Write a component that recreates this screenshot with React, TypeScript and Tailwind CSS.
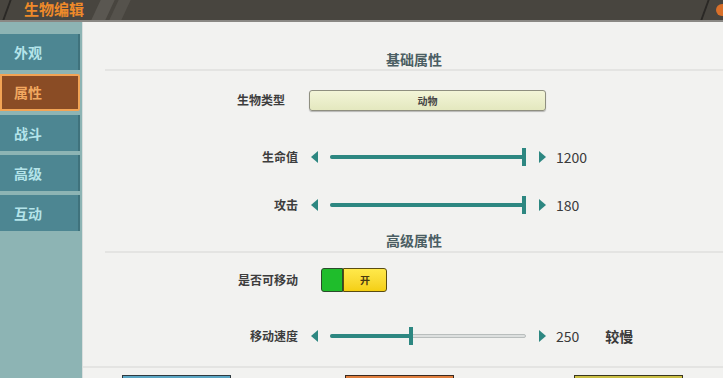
import { ReactNode } from "react";

const font = { fontFamily: '"Noto Sans CJK SC", "Noto Sans", sans-serif' };

const tabs = ["外观", "属性", "战斗", "高级", "互动"];

function Sidebar() {
  return (
    <div className="w-[83px] shrink-0 bg-[#8db4b4] flex flex-col pt-[12px] gap-[4px] border-r border-[#d9dedd]">
      {tabs.map((t) =>
        t === "属性" ? (
          <div
            key={t}
            className="h-[37px] mr-[2px] bg-[#8a4c25] border-2 border-[#f2a455] rounded-r-[2px] flex items-center pl-[12px] text-[14px] font-bold text-[#f2a860]"
          >
            {t}
          </div>
        ) : (
          <div
            key={t}
            className="h-[36px] mr-[2px] bg-[#4d8692] border-r-2 border-[#3f727c] flex items-center pl-[14px] text-[14px] font-bold text-[#b4e4ea]"
          >
            {t}
          </div>
        )
      )}
    </div>
  );
}

function Arrow({ dir }: { dir: "l" | "r" }) {
  return (
    <svg width="8" height="12" viewBox="0 0 8 12" className="shrink-0">
      {dir === "l" ? <path d="M7 0 L0 6 L7 12 Z" fill="#2d8781" /> : <path d="M1 0 L8 6 L1 12 Z" fill="#2d8781" />}
    </svg>
  );
}

function Slider({ pos, value, extra }: { pos: number; value: string; extra?: string }) {
  return (
    <div className="flex items-center h-full">
      <div className="ml-[13px]">
        <Arrow dir="l" />
      </div>
      <div className="relative ml-[11px] w-[196px] h-[20px] flex items-center">
        <div className="absolute left-0 right-0 h-[4px] bg-[#dde0df] border border-[#b9bebd] rounded-full" />
        <div className="absolute left-0 h-[4px] bg-[#2d8781] rounded-l-full" style={{ width: pos }} />
        <div className="absolute top-[1px] h-[18px] w-[4px] bg-[#2d8781]" style={{ left: pos - 2 }} />
      </div>
      <div className="ml-[12px]">
        <Arrow dir="r" />
      </div>
      <span className="ml-[10px] text-[14px] text-[#3a3a3a]">{value}</span>
      {extra && <span className="ml-[26px] text-[14px] font-bold text-[#3a3a3a]">{extra}</span>}
    </div>
  );
}

function Row({ label, h, children, labelW = 215 }: { label: string; h: number; children: ReactNode; labelW?: number }) {
  return (
    <div className="flex items-center" style={{ height: h }}>
      <div className="text-right text-[12px] font-bold text-[#3d3d3d] shrink-0" style={{ width: labelW }}>
        {label}
      </div>
      {children}
    </div>
  );
}

function Header({ text, h, pt }: { text: string; h: number; pt: number }) {
  return (
    <div className="ml-[22px] border-b-2 border-[#e4e4e2] flex justify-center" style={{ height: h, paddingTop: pt }}>
      <span className="text-[14px] leading-[16px] font-bold text-[#4b5e63]">{text}</span>
    </div>
  );
}

export default function App() {
  return (
    <div className="w-[723px] h-[378px] overflow-hidden bg-[#f2f2f0] flex flex-col" style={font}>
      <div className="relative h-[22px] shrink-0 bg-[#48453f] border-b-2 border-[#8a8884]">
        <div className="absolute left-[6px] top-0 h-[20px] w-[2px] bg-[#2a2825] skew-x-[-20deg]" />
        <div className="absolute left-[96px] top-0 h-[20px] w-[14px] bg-[#5a5751] skew-x-[-25deg]" />
        <div className="absolute left-[114px] top-0 h-[20px] w-[12px] bg-[#55524c] skew-x-[-25deg]" />
        <div className="absolute left-[704px] top-0 h-[20px] w-[2px] bg-[#2a2825] skew-x-[-20deg]" />
        <div className="absolute left-[716px] top-[4px] h-[12px] w-[7px] rounded-l-full bg-[#d9702a]" />
        <div className="absolute left-[24px] top-0 text-[15px] font-bold text-[#ee8a2a] leading-[18px]">生物编辑</div>
      </div>
      <div className="flex flex-1">
        <Sidebar />
        <div className="flex-1 flex flex-col">
          <Header text="基础属性" h={49} pt={29} />
          <Row label="生物类型" h={58} labelW={202}>
            <div className="ml-[24px] w-[237px] h-[21px] rounded-[3px] border border-[#8f8f80] bg-gradient-to-b from-[#f3f5d8] to-[#e4e8bf] shadow-[0_1px_1px_rgba(0,0,0,0.25)] flex items-center justify-center text-[10px] font-bold text-[#444]">
              动物
            </div>
          </Row>
          <Row label="生命值" h={56}>
            <Slider pos={194} value="1200" />
          </Row>
          <Row label="攻击" h={40}>
            <Slider pos={194} value="180" />
          </Row>
          <Header text="高级属性" h={28} pt={7} />
          <Row label="是否可移动" h={53}>
            <div className="ml-[23px] flex h-[24px]">
              <div className="w-[22px] h-full bg-[#1fbd2c] border border-[#2b4a2b] rounded-l-[3px]" />
              <div className="w-[44px] h-full bg-gradient-to-b from-[#ffe94a] to-[#f4cf10] border border-[#5a4c10] rounded-r-[3px] flex items-center justify-center text-[10px] font-bold text-[#4a3a10]">
                开
              </div>
            </div>
          </Row>
          <Row label="移动速度" h={60}>
            <Slider pos={81} value="250" extra="较慢" />
          </Row>
          <div className="border-t-2 border-[#e4e4e2] flex-1 relative">
            <div className="absolute left-[39px] top-[7px] w-[109px] h-[10px] bg-[#5ba6c4] border border-[#2f3a40]" />
            <div className="absolute left-[262px] top-[7px] w-[109px] h-[10px] bg-[#e07f3e] border border-[#3a2a20]" />
            <div className="absolute left-[491px] top-[7px] w-[109px] h-[10px] bg-[#cbbf45] border border-[#3a3620]" />
          </div>
        </div>
      </div>
    </div>
  );
}
